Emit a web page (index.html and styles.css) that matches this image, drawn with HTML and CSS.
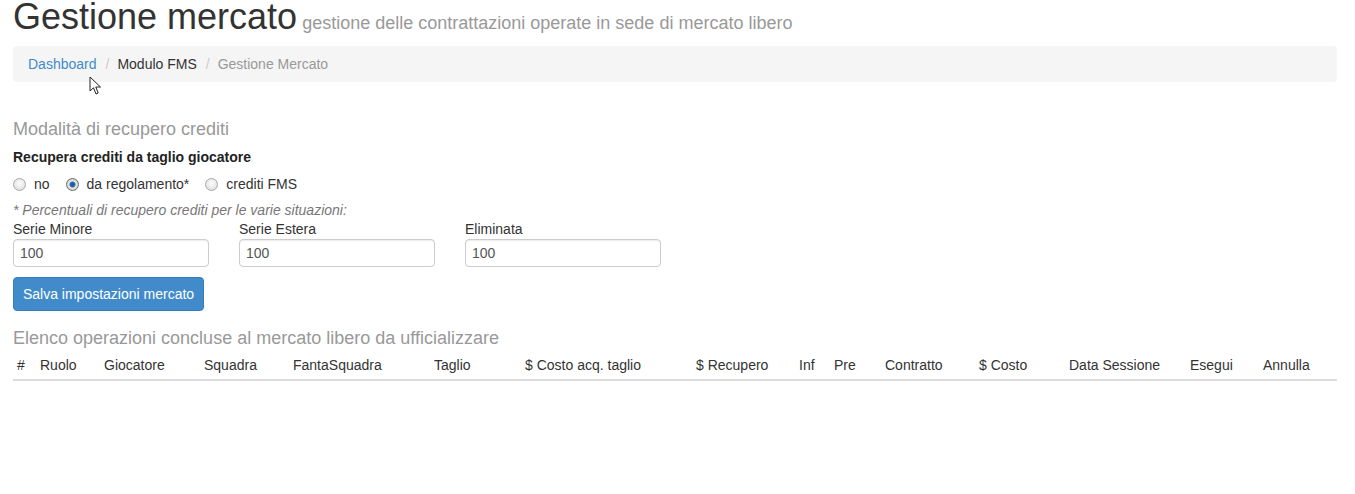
FILE: index.html
```html
<!DOCTYPE html>
<html lang="it">
<head>
    <meta charset="UTF-8">
    <title>Gestione mercato</title>
    <link rel="stylesheet" href="styles.css">
</head>
<body>
    <div class="page">
        <h1>Gestione mercato<small> gestione delle contrattazioni operate in sede di mercato libero</small></h1>

        <ol class="breadcrumb">
            <li><a href="#">Dashboard</a></li>
            <li>Modulo FMS</li>
            <li class="active">Gestione Mercato</li>
        </ol>

        <h4 class="section-title">Modalità di recupero crediti</h4>
        <div class="field-label">Recupera crediti da taglio giocatore</div>
        <div class="radios">
            <label><input type="radio" name="recupero"> no</label>
            <label><input type="radio" name="recupero" checked> da regolamento*</label>
            <label><input type="radio" name="recupero"> crediti FMS</label>
        </div>
        <div class="note">* Percentuali di recupero crediti per le varie situazioni:</div>

        <div class="perc-grid">
            <div class="perc">
                <label>Serie Minore</label>
                <input type="text" class="form-control" value="100">
            </div>
            <div class="perc">
                <label>Serie Estera</label>
                <input type="text" class="form-control" value="100">
            </div>
            <div class="perc">
                <label>Eliminata</label>
                <input type="text" class="form-control" value="100">
            </div>
        </div>

        <button class="btn-primary">Salva impostazioni mercato</button>

        <h4 class="section-title list-title">Elenco operazioni concluse al mercato libero da ufficializzare</h4>
        <table class="ops">
            <colgroup>
                <col style="width:23px"><col style="width:64px"><col style="width:100px"><col style="width:89px">
                <col style="width:141px"><col style="width:91px"><col style="width:171px"><col style="width:103px">
                <col style="width:35px"><col style="width:51px"><col style="width:94px"><col style="width:90px">
                <col style="width:121px"><col style="width:73px"><col style="width:78px">
            </colgroup>
            <thead>
                <tr>
                    <th>#</th>
                    <th>Ruolo</th>
                    <th>Giocatore</th>
                    <th>Squadra</th>
                    <th>FantaSquadra</th>
                    <th>Taglio</th>
                    <th>$ Costo acq. taglio</th>
                    <th>$ Recupero</th>
                    <th>Inf</th>
                    <th>Pre</th>
                    <th>Contratto</th>
                    <th>$ Costo</th>
                    <th>Data Sessione</th>
                    <th>Esegui</th>
                    <th>Annulla</th>
                </tr>
            </thead>
            <tbody></tbody>
        </table>
    </div>

    <svg class="cursor" width="13" height="20" viewBox="0 0 13 20">
        <path d="M1 1 L1 15 L4.5 11.8 L7 18 L9.2 17 L6.8 11 L11.5 11 Z" fill="#fff" stroke="#222" stroke-width="1"/>
    </svg>
</body>
</html>
```

FILE: styles.css
```css
body {
    margin: 0;
    font-family: "Liberation Sans", Arial, sans-serif;
    font-size: 14px;
    line-height: 20px;
    color: #333;
    background: #fff;
}
.page {
    padding: 0 18px 0 13px;
}
h1 {
    margin: 0 0 14px;
    padding-top: 2px;
    font-size: 36px;
    line-height: 30px;
    font-weight: normal;
    color: #333;
}
h1 small {
    font-size: 18px;
    line-height: 1;
    color: #999;
}
.breadcrumb {
    list-style: none;
    margin: 0;
    padding: 8px 15px;
    background: #f5f5f5;
    border-radius: 4px;
    display: flex;
}
.breadcrumb li {
    color: #333;
}
.breadcrumb li + li::before {
    content: "/";
    color: #ccc;
    padding: 0 8px 0 9px;
}
.breadcrumb li.active {
    color: #999;
}
.breadcrumb a {
    color: #428bca;
    text-decoration: none;
}
.section-title {
    margin: 37px 0 8px;
    font-size: 18px;
    line-height: 20px;
    font-weight: normal;
    color: #999;
}
.field-label {
    font-weight: bold;
    color: #222;
}
.radios {
    display: flex;
    gap: 16px;
    margin-top: 7px;
}
.radios label {
    display: flex;
    align-items: center;
    gap: 8px;
}
.radios input {
    appearance: none;
    margin: 0;
    width: 13px;
    height: 13px;
    border-radius: 50%;
    border: 1px solid #a8a8a8;
    background: radial-gradient(circle at 50% 40%, #fdfdfd, #d8d8d8);
}
.radios input:checked {
    background: radial-gradient(circle, #1b4f8a 0, #2c6fb5 2.5px, #e6e6e6 3.5px, #cfcfcf 6px);
    border-color: #6a6a6a;
}
.note {
    margin-top: 6px;
    font-style: italic;
    color: #777;
}
.perc-grid {
    display: grid;
    grid-template-columns: repeat(3, 196px);
    column-gap: 30px;
    margin-top: -1px;
}
.perc label {
    display: block;
    color: #333;
}
.form-control {
    box-sizing: border-box;
    display: block;
    width: 196px;
    height: 28px;
    padding: 4px 6px;
    border: 1px solid #ccc;
    border-radius: 4px;
    font-family: inherit;
    font-size: 14px;
    color: #555;
    box-shadow: inset 0 1px 1px rgba(0, 0, 0, 0.075);
}
.btn-primary {
    margin-top: 10px;
    height: 34px;
    width: 191px;
    padding: 0;
    border: 1px solid #357ebd;
    border-radius: 4px;
    background: #428bca;
    color: #fff;
    font-family: inherit;
    font-size: 14px;
}
.list-title {
    margin: 17px 0 3px;
}
.ops {
    width: 100%;
    table-layout: fixed;
    border-collapse: collapse;
}
.ops th {
    text-align: left;
    font-weight: normal;
    padding: 4px;
    border-bottom: 2px solid #ddd;
    white-space: nowrap;
    color: #333;
}
.cursor {
    position: absolute;
    left: 89px;
    top: 76px;
}
```
